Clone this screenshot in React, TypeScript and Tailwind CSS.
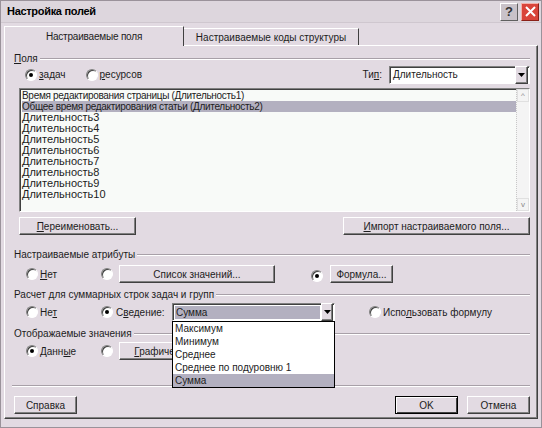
import React from 'react';

const face = 'bg-[#e2dae2]';

const Radio = ({ checked = false }: { checked?: boolean }) => (
  <span className="inline-flex h-[12px] w-[12px] shrink-0 items-center justify-center rounded-full border border-t-[#808080] border-l-[#808080] border-r-white border-b-white bg-white shadow-[inset_1px_1px_0_#404040]">
    {checked && <span className="h-[4px] w-[4px] rounded-full bg-black" />}
  </span>
);

const Btn = ({
  children,
  className = '',
  isDefault = false,
}: {
  children: React.ReactNode;
  className?: string;
  isDefault?: boolean;
}) => (
  <div
    className={`flex h-[18px] items-center justify-center ${face} ${
      isDefault
        ? 'border border-black shadow-[inset_1px_1px_0_#fff,inset_-1px_-1px_0_#404040]'
        : 'border border-t-white border-l-white border-r-[#404040] border-b-[#404040] shadow-[inset_-1px_-1px_0_#808080]'
    } ${className}`}
  >
    {children}
  </div>
);

const GroupHeader = ({ label, className = '' }: { label: React.ReactNode; className?: string }) => (
  <div className={`flex h-[13px] items-center ${className}`}>
    <span className="pr-[2px] leading-[13px]">{label}</span>
    <div className="flex-1">
      <div className="h-px bg-[#a8a0a8]" />
      <div className="h-px bg-white" />
    </div>
  </div>
);

const DownArrow = () => (
  <svg width="7" height="4" viewBox="0 0 7 4">
    <path d="M0 0h7L3.5 4z" fill="#000" />
  </svg>
);

const listItems = [
  'Время редактирования страницы (Длительность1)',
  'Общее время редактирования статьи (Длительность2)',
  'Длительность3',
  'Длительность4',
  'Длительность5',
  'Длительность6',
  'Длительность7',
  'Длительность8',
  'Длительность9',
  'Длительность10',
];

const dropItems = ['Максимум', 'Минимум', 'Среднее', 'Среднее по подуровню 1', 'Сумма'];

export default function App() {
  return (
    <div
      className={`relative h-[428px] w-[542px] overflow-hidden border border-[#9a929a] ${face} text-[10px] text-[#1c1c1c]`}
      style={{ fontFamily: '"Liberation Sans", Arial, sans-serif' }}
    >
      {/* title bar */}
      <div className="flex h-[22px] items-center justify-between border-b border-[#cfc7cf] bg-[#ddd6dd] pl-[6px] pr-[2px]">
        <span className="text-[11px] font-bold tracking-[-0.3px] text-black">Настройка полей</span>
        <div className="flex gap-[3px]">
          <div className="flex h-[18px] w-[18px] items-center justify-center border border-t-white border-l-white border-r-[#606060] border-b-[#606060] bg-[#c9c2c9] text-[13px] font-bold text-[#333]">
            ?
          </div>
          <div className="flex h-[18px] w-[18px] items-center justify-center border border-t-[#f2b0a8] border-l-[#f2b0a8] border-r-[#8a2018] border-b-[#8a2018] bg-[#d9453a]">
            <svg width="11" height="11" viewBox="0 0 11 11">
              <path d="M1 1l9 9M10 1l-9 9" stroke="#fff" strokeWidth="2" />
            </svg>
          </div>
        </div>
      </div>

      {/* tabs */}
      <div className="mt-[3px] flex h-[19px] items-end pl-[3px]">
        <div className={`relative z-10 -mb-px flex h-[20px] w-[180px] items-center justify-center border-l border-t border-r border-l-white border-t-white border-r-[#404040] tracking-[-0.2px] ${face}`}>
          Настраиваемые поля
        </div>
        <div className="flex h-[17px] w-[175px] items-center justify-center border-t border-r border-t-white border-r-[#404040]">
          Настраиваемые коды структуры
        </div>
      </div>

      {/* panel */}
      <div className="ml-[3px] flex h-[374px] w-[534px] flex-col border border-t-white border-l-white border-r-[#404040] border-b-[#404040] pl-[9px] pr-[7px] shadow-[inset_-1px_-1px_0_#808080]">
        <GroupHeader label={<><u>П</u>оля</>} className="mt-[6px]" />

        <div className="mt-px flex h-[17px] items-center">
          <div className="ml-[11px] flex items-center gap-[2px]">
            <Radio checked />
            <span><u>з</u>адач</span>
          </div>
          <div className="ml-[20px] flex items-center gap-[2px]">
            <Radio />
            <span><u>р</u>есурсов</span>
          </div>
          <div className="ml-auto flex items-center">
            <span className="mr-[7px]">Ти<u>п</u>:</span>
            <div className="flex h-[18px] w-[141px] items-center border border-t-[#808080] border-l-[#808080] border-r-white border-b-white bg-white pl-[3px] pr-px shadow-[inset_1px_1px_0_#404040]">
              <span className="flex-1">Длительность</span>
              <Btn className="h-[14px] w-[13px]">
                <DownArrow />
              </Btn>
            </div>
          </div>
        </div>

        {/* list */}
        <div className="ml-[5px] mt-[5px] flex h-[124px] border border-t-[#808080] border-l-[#808080] border-r-white border-b-white bg-[#f8faf8] shadow-[inset_1px_1px_0_#404040]">
          <div className="flex-1 pl-[2px] pt-px">
            {listItems.map((it, i) => (
              <div
                key={it}
                className={`h-[11px] whitespace-nowrap leading-[11px] ${
                  i < 2 ? 'text-[10px] tracking-[-0.3px]' : 'text-[11px]'
                } ${i === 1 ? 'bg-[#b3b0c0]' : ''}`}
              >
                {it}
              </div>
            ))}
          </div>
          <div className="flex w-[13px] flex-col border-l border-dotted border-[#c8c8c8] bg-[#f4f4f4]">
            <div className="flex h-[13px] items-center justify-center border border-[#e0e0e0] text-[8px] leading-none text-[#888]">
              ^
            </div>
            <div className="flex-1" />
            <div className="flex h-[13px] items-center justify-center border border-[#e0e0e0] text-[8px] leading-none text-[#888]">
              v
            </div>
          </div>
        </div>

        <div className="ml-[5px] mt-[5px] flex justify-between">
          <Btn className="w-[117px]">
            <span><u>П</u>ереименовать...</span>
          </Btn>
          <Btn className="w-[187px]">
            <span><u>И</u>мпорт настраиваемого поля...</span>
          </Btn>
        </div>

        <GroupHeader label="Настраиваемые атрибуты" className="mt-[13px]" />

        <div className="mt-[4px] flex h-[18px] items-center">
          <div className="ml-[12px] flex w-[75px] items-center gap-[2px]">
            <Radio />
            <span><u>Н</u>ет</span>
          </div>
          <Radio />
          <Btn className="ml-[6px] w-[156px]">
            <span>Список значений...</span>
          </Btn>
          <div className="ml-[36px]">
            <Radio checked />
          </div>
          <Btn className="ml-[7px] w-[63px]">
            <span>Формула...</span>
          </Btn>
        </div>

        <GroupHeader label="Расчет для суммарных строк задач и групп" className="mt-[5px]" />

        <div className="relative z-20 mt-[2px] flex h-[18px] items-center">
          <div className="ml-[12px] flex w-[75px] items-center gap-[2px]">
            <Radio />
            <span>Не<u>т</u></span>
          </div>
          <div className="flex w-[71px] items-center gap-[3px]">
            <Radio checked />
            <span>С<u>в</u>едение:</span>
          </div>
          <div className="relative">
            <div className="flex h-[18px] w-[163px] items-center border border-t-[#808080] border-l-[#808080] border-r-white border-b-white bg-white pl-[2px] pr-px shadow-[inset_1px_1px_0_#404040]">
              <span className="mr-px h-[13px] flex-1 bg-[#b3b0c0] pl-[1px] leading-[13px]">Сумма</span>
              <Btn className="h-[14px] w-[12px]">
                <DownArrow />
              </Btn>
            </div>
            <div className="absolute left-0 top-[18px] w-[163px] border border-black bg-white">
              {dropItems.map((it, i) => (
                <div
                  key={it}
                  className={`h-[13px] pl-[2px] leading-[13px] ${i === 4 ? 'bg-[#b3b0c0]' : ''}`}
                >
                  {it}
                </div>
              ))}
            </div>
          </div>
          <div className="ml-[34px] flex items-center gap-[2px]">
            <Radio />
            <span>Испо<u>л</u>ьзовать формулу</span>
          </div>
        </div>

        <GroupHeader label="Отображаемые значения" className="mt-[6px]" />

        <div className="mt-[2px] flex h-[18px] items-center">
          <div className="ml-[12px] flex w-[75px] items-center gap-[2px]">
            <Radio checked />
            <span>Данн<u>ы</u>е</span>
          </div>
          <Radio />
          <Btn className="ml-[6px] w-[100px]">
            <span><u>Г</u>рафические...</span>
          </Btn>
        </div>

        <div className="ml-[-2px] mt-[25px]">
          <div className="h-px bg-[#a8a0a8]" />
          <div className="h-px bg-white" />
        </div>

        <div className="mt-[9px] flex items-center">
          <Btn className="w-[63px]">
            <span>Справка</span>
          </Btn>
          <Btn isDefault className="ml-auto w-[63px]">
            <span>OK</span>
          </Btn>
          <Btn className="ml-[9px] w-[63px]">
            <span>Отмена</span>
          </Btn>
        </div>
      </div>
    </div>
  );
}
